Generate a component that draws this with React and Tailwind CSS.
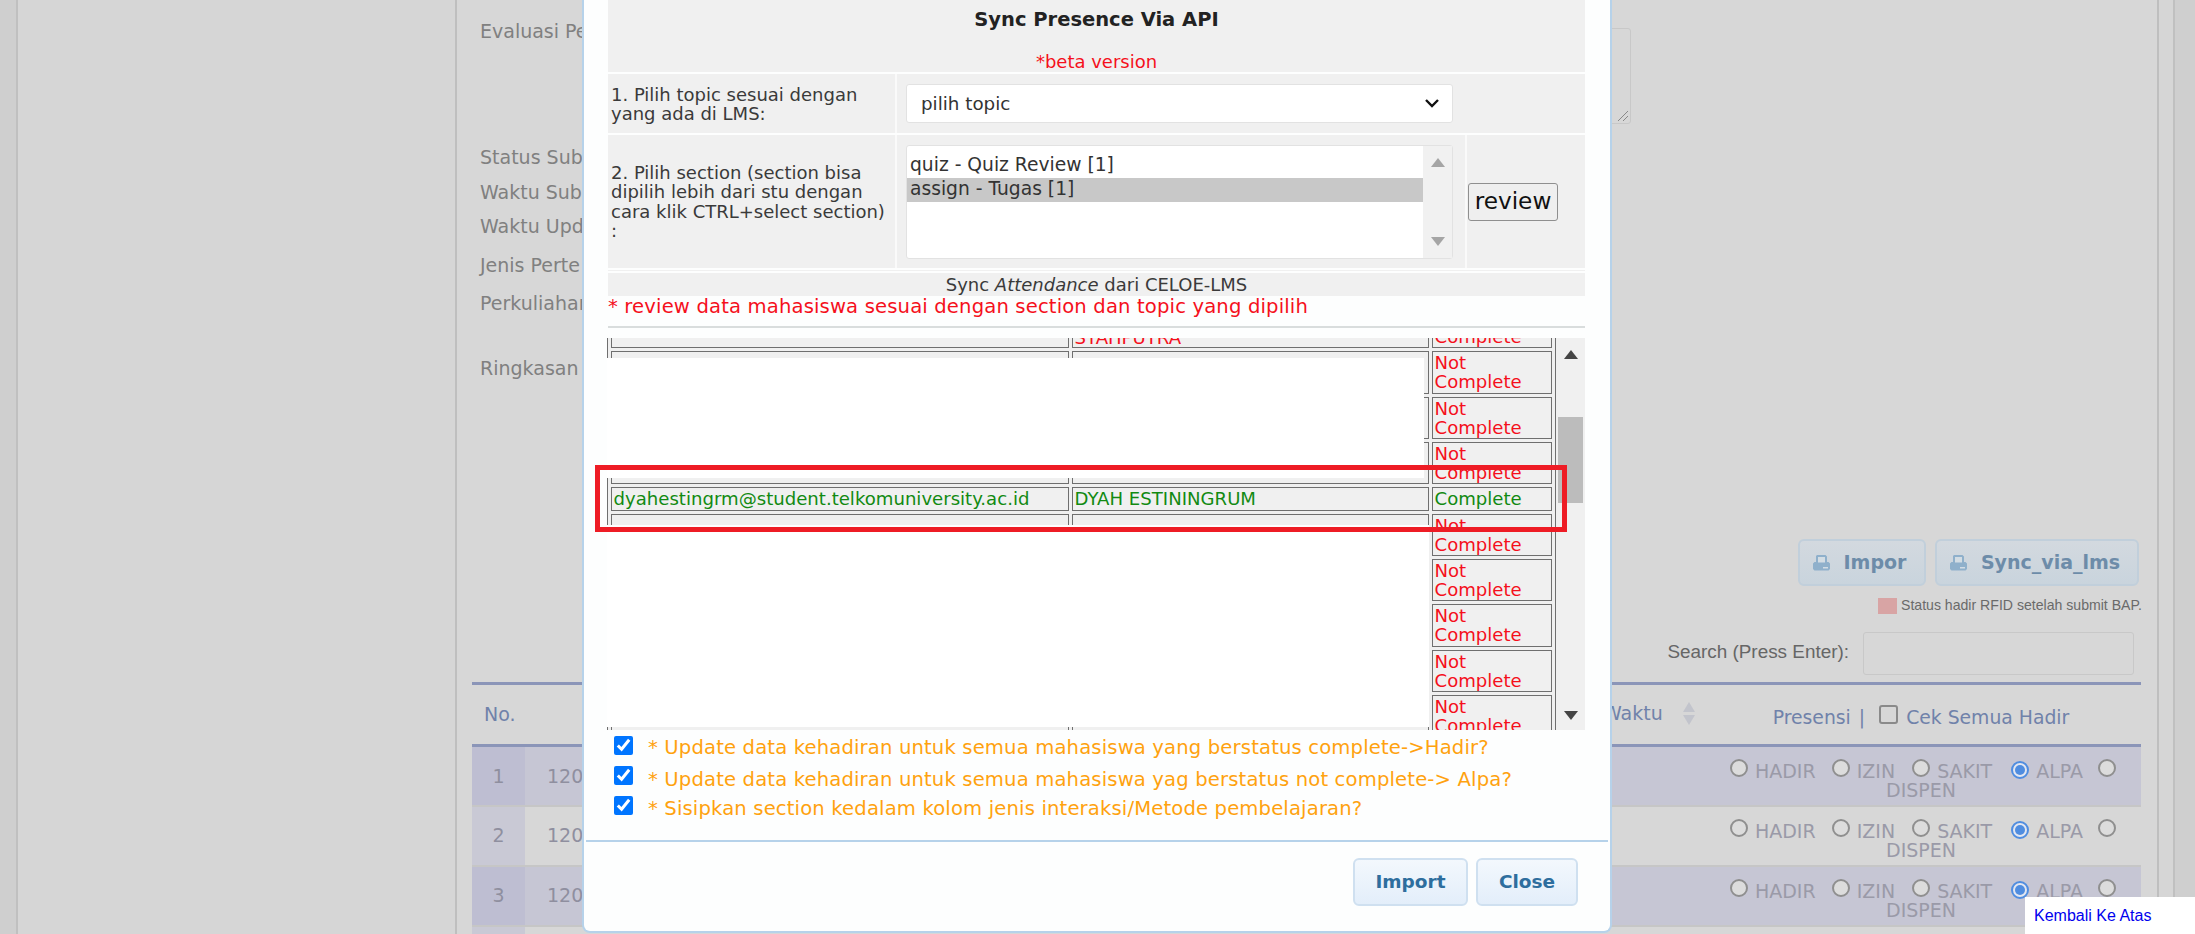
import React from "react";

const dv = "font-['DejaVu_Sans',sans-serif]";
const lib = "font-['Liberation_Sans',sans-serif]";

function Radio({ on }) {
  return on ? (
    <span className="inline-flex w-[18px] h-[18px] -my-[2px] rounded-full border-2 border-[#4f8de0] bg-[#e2e6f0] items-center justify-center align-[3px]">
      <span className="w-[10px] h-[10px] rounded-full bg-[#4f8de0]" />
    </span>
  ) : (
    <span className="inline-block w-[18px] h-[18px] -my-[2px] rounded-full border-2 border-[#8f8f8f] bg-[#dcdcdc] align-[3px]" />
  );
}

function Opt({ label, on, gap }) {
  return (
    <>
      <Radio on={on} />
      <span className={`ml-[7px] ${gap}`}>{label}</span>
    </>
  );
}

function PresensiCell() {
  return (
    <div className="text-[19px] leading-[19px] text-[#9a9aa8] text-center pt-[14px]">
      <Opt label="HADIR" gap="mr-[16px]" />
      <Opt label="IZIN" gap="mr-[17px]" />
      <Opt label="SAKIT" gap="mr-[19px]" />
      <Opt label="ALPA" on gap="mr-[15px]" />
      <span className="-mr-[4px]"><Radio /></span>
      <br />
      DISPEN
    </div>
  );
}

function Disk() {
  return (
    <svg width="17" height="18" viewBox="0 0 17 18" className="shrink-0">
      <path d="M4 1h8.500l1.500 1.500V8h1.500L17 9.500V15l-1.500 1.500h-14L0 15V9.500L1.500 8H3V2z" fill="#8fb0cb" />
      <path d="M5 3h7v5.500H5z" fill="#d3dde4" />
      <path d="M10 13h5v1.500h-5z" fill="#d3dde4" />
    </svg>
  );
}

function Triangle({ down, color = "#a5a5a5" }) {
  return (
    <svg width="14" height="9" viewBox="0 0 14 9">
      <path d={down ? "M0 0h14L7 9z" : "M7 0l7 9H0z"} fill={color} />
    </svg>
  );
}

const cellCls = "border-[1.5px] border-[#6f6f6f] bg-[#f0f0f0] p-0 px-[1.5px] text-left";

function Row({ email = "", name = "", done, first }) {
  const color = done ? "text-[#128a12]" : "text-[#f5101c]";
  return (
    <tr className={color}>
      <td className={`${cellCls} align-middle ${done ? "h-[23.500px]" : "h-[42.300px]"}`}>{email}</td>
      <td className={`${cellCls} ${first ? "align-bottom" : "align-middle"}`}>{name}</td>
      <td className={`${cellCls} align-middle`}>
        {done ? "Complete" : <>Not<br />Complete</>}
      </td>
    </tr>
  );
}

function ConfirmLine({ text, nudge }) {
  return (
    <label className="flex items-start h-[30px]">
      <input type="checkbox" checked readOnly className="w-[19px] h-[19px] accent-[#0075ff] m-0 shrink-0" />
      <span className={`ml-[15px] text-[19.600px] leading-[24px] text-[#ffa20f] tracking-[0.15px] ${nudge}`}>{text}</span>
    </label>
  );
}

function Modal() {
  return (
    <div className={`absolute left-[582px] top-0 w-[1030px] h-[933px] bg-[#fdfefe] border-x-2 border-b-2 border-[#b6d2ea] rounded-b-[8px] ${dv} text-[#3a3a3a]`}>
      <div className="ml-[24px] w-[977px]">
        <div className="h-[72px] bg-[#f0f0f0] flex flex-col items-center">
          <div className="mt-[9px] text-[19.500px] leading-[22px] font-bold text-[#222]">Sync Presence Via API</div>
          <div className="mt-[21px] text-[18px] leading-[20px] text-[#f5101c]">*beta version</div>
        </div>
        <div className="h-[2px]" />
        <div className="h-[59px] flex bg-[#f0f0f0]">
          <div className="w-[287px] pl-[3px] flex items-center text-[18px] leading-[19px]">
            <div>1. Pilih topic sesuai dengan<br />yang ada di LMS:</div>
          </div>
          <div className="w-[2px] bg-[#fafafa]" />
          <div className="flex-1 pl-[9px] pt-[10px]">
            <div className="w-[547px] h-[39px] bg-white border border-[#e2e2e2] rounded-[3px] pl-[14px] pr-[12px] flex items-center justify-between text-[18.300px] text-[#333]">
              <span>pilih topic</span>
              <svg width="16" height="11" viewBox="0 0 16 11"><path d="M2 2l6 6 6-6" fill="none" stroke="#111" strokeWidth="2.400" /></svg>
            </div>
          </div>
        </div>
        <div className="h-[2px]" />
        <div className="h-[133px] flex bg-[#f0f0f0]">
          <div className="w-[287px] pl-[3px] flex items-center text-[18px] leading-[19.400px]">
            <div>2. Pilih section (section bisa<br />dipilih lebih dari stu dengan<br />cara klik CTRL+select section)<br />:</div>
          </div>
          <div className="w-[2px] bg-[#fafafa]" />
          <div className="w-[568px] pl-[9px] pt-[10px]">
            <div className="w-[547px] h-[114px] bg-white border border-[#e2e2e2] rounded-[3px] flex text-[18.700px] text-[#333]">
              <div className="flex-1 pt-[8px]">
                <div className="h-[24px] pl-[3px] leading-[21px]">quiz - Quiz Review [1]</div>
                <div className="h-[24px] pl-[3px] leading-[21px] bg-[#c8c8c8]">assign - Tugas [1]</div>
              </div>
              <div className="w-[29px] bg-[#f1f1f1] flex flex-col items-center justify-between py-[12px]">
                <Triangle />
                <Triangle down />
              </div>
            </div>
          </div>
          <div className="w-[2px] bg-[#fafafa]" />
          <div className="flex-1 flex items-center pl-[1px]">
            <div className="w-[90px] h-[38px] bg-[#efefef] border border-[#8f8f8f] rounded-[3px] flex items-center justify-center text-[23.200px] text-[#111] pb-[1px]">review</div>
          </div>
        </div>
        <div className="h-[5px] flex flex-col"><div className="h-[2px]" /><div className="h-[1px] bg-[#f0f0f0]" /></div>
        <div className="h-[23px] bg-[#f0f0f0] text-center text-[18px] leading-[22px] pt-[1px]">Sync <i>Attendance</i> dari CELOE-LMS</div>
        <div className="h-[21px] text-[19.600px] leading-[21px] text-[#f5101c] tracking-[0.15px] whitespace-nowrap">* review data mahasiswa sesuai dengan section dan topic yang dipilih</div>
        <div className="mt-[9px] h-[2px] bg-[#d9dddd]" />
      </div>

      <div className="relative ml-[23px] w-[978px] h-[392px] mt-[10px] bg-[#f0f0f0] flex overflow-hidden text-[18.100px] leading-[19px]">
        <div className="w-[949px] overflow-hidden">
          <table className="border-separate border-spacing-[3px] table-fixed w-[949px] border-[1.5px] border-[#6f6f6f] -mt-[36px]">
            <colgroup>
              <col className="w-[458px]" />
              <col className="w-[357px]" />
              <col className="w-[120px]" />
            </colgroup>
            <tbody>
              <Row first name="SYAHPUTRA" />
              <Row />
              <Row />
              <Row />
              <Row done email="dyahestingrm@student.telkomuniversity.ac.id" name="DYAH ESTININGRUM" />
              <Row />
              <Row />
              <Row />
              <Row />
              <Row />
            </tbody>
          </table>
        </div>
        <div className="w-[29px] flex flex-col items-center">
          <div className="mt-[12px]"><Triangle color="#444" /></div>
          <div className="mt-[58px] w-[25px] h-[86px] bg-[#bcbcbc]" />
          <div className="mt-[208px]"><Triangle down color="#444" /></div>
        </div>
        <div className="absolute left-0 top-[20px] w-[817px] h-[120px] bg-white" />
        <div className="absolute left-0 top-[187px] w-[822px] h-[202px] bg-white" />
      </div>

      <div className="ml-[30px] mt-[6px]">
        <ConfirmLine nudge="mt-0" text="* Update data kehadiran untuk semua mahasiswa yang berstatus complete->Hadir?" />
        <ConfirmLine nudge="mt-[2px]" text="* Update data kehadiran untuk semua mahasiswa yag berstatus not complete-> Alpa?" />
        <ConfirmLine nudge="mt-[1px]" text="* Sisipkan section kedalam kolom jenis interaksi/Metode pembelajaran?" />
      </div>

      <div className="mx-[2px] mt-[14px] h-[2px] bg-[#b6d2ea]" />
      <div className="flex justify-end gap-[8px] pt-[16px] pr-[32px]">
        {[["Import", "w-[115px]"], ["Close", "w-[102px]"]].map(([t, w]) => (
          <div key={t} className={`${w} h-[48px] rounded-[6px] border-2 border-[#cfe0f0] bg-gradient-to-b from-[#f3f8fd] to-[#e3eefa] flex items-center justify-center text-[18.500px] font-bold text-[#2e6e9e]`}>{t}</div>
        ))}
      </div>

      <div className="absolute left-[11px] top-[465px] w-[972px] h-[67px] border-[5px] border-[#ee1c25]" />
    </div>
  );
}

export default function App() {
  return (
    <div className={`relative w-[2195px] h-[934px] overflow-hidden bg-[#cfcfcf] ${dv}`}>
      <div className="ml-[16px] w-[2159px] h-[934px] bg-[#d6d6d6] border-x-2 border-[#c0c0c0]">
        <div className="ml-[437px] w-[1704px] h-[934px] bg-[#d7d7d7] border-x-2 border-[#bfbfbf] pl-[15px] pr-[15px]">
          <div className="h-[682px] flex justify-between">
            <div className="pl-[8px] pt-[20px] text-[19px] leading-[22px] text-[#808080] flex flex-col">
              <div>Evaluasi Pe</div>
              <div className="mt-[104px]">Status Sub</div>
              <div className="mt-[13px]">Waktu Sub</div>
              <div className="mt-[12px]">Waktu Upd</div>
              <div className="mt-[17px]">Jenis Perte</div>
              <div className="mt-[16px]">Perkuliahan</div>
              <div className="mt-[43px]">Ringkasan</div>
            </div>
            <div className="flex flex-col items-end">
              <div className="mt-[28px] mr-[511px] w-[100px] h-[96px] border border-[#c8c8c8] rounded-[3px] relative">
                <svg width="12" height="12" viewBox="0 0 12 12" className="absolute right-[1px] bottom-[1px]"><path d="M1 11L11 1M6 11l5-5" stroke="#888" strokeWidth="1" /></svg>
              </div>
              <div className="mt-[415px] flex gap-[9px] mr-[3px]">
                <div className="w-[128px] h-[47px] pr-[5px] rounded-[6px] border-2 border-[#c1cfdb] bg-gradient-to-b from-[#d3d9df] to-[#c9d4dd] flex items-center justify-center gap-[14px] text-[19px] font-bold text-[#6d8ca9]">
                  <Disk />Impor
                </div>
                <div className="w-[204px] h-[47px] pr-[4px] rounded-[6px] border-2 border-[#c1cfdb] bg-gradient-to-b from-[#d3d9df] to-[#c9d4dd] flex items-center justify-center gap-[14px] text-[19px] font-bold text-[#6d8ca9]">
                  <Disk />Sync_via_lms
                </div>
              </div>
              <div className={`mt-[9px] flex items-center ${lib} text-[14.100px] text-[#6a6a6a]`}>
                <span className="w-[19px] h-[16px] bg-[#d8a4a4] mr-[4px]" />
                Status hadir RFID setelah submit BAP.
              </div>
              <div className={`mt-[16px] flex items-center mr-[8px] ${lib} text-[18.900px] text-[#666]`}>
                <span className="-mt-[2px]">Search (Press Enter):</span>
                <div className="ml-[14px] w-[271px] h-[43px] border border-[#c8c8c8] rounded-[3px]" />
              </div>
            </div>
          </div>

          <table className="w-[1669px] table-fixed border-collapse">
            <colgroup>
              <col className="w-[53px]" />
              <col className="w-[1075px]" />
              <col className="w-[101px]" />
              <col className="w-[440px]" />
            </colgroup>
            <thead>
              <tr className="h-[62px] border-y-[3px] border-[#8b95b8] text-[19px] text-[#7082aa]">
                <th className="font-normal text-left pl-[12px]">No.</th>
                <th />
                <th className="font-normal text-left pb-[2px]">
                  <span className="flex items-center justify-between pr-[6px] pl-[3px]">
                    <span>Waktu</span>
                    <span className="flex flex-col gap-[3px]">
                      <svg width="12" height="10" viewBox="0 0 12 10"><path d="M6 0l6 10H0z" fill="#c2c4cc" /></svg>
                      <svg width="12" height="10" viewBox="0 0 12 10"><path d="M0 0h12L6 10z" fill="#c2c4cc" /></svg>
                    </span>
                  </span>
                </th>
                <th className="font-normal pt-[6px]">
                  <span className="inline-flex items-center text-[18.800px]">
                    Presensi<span className="ml-[8px]">|</span>
                    <span className="ml-[14px] -mt-[8px] w-[19px] h-[19px] border-2 border-[#8a8a8a] rounded-[3px]" />
                    <span className="ml-[8px]">Cek Semua Hadir</span>
                  </span>
                </th>
              </tr>
            </thead>
            <tbody>
              {[1, 2, 3].map((n) => (
                <tr key={n} className={`h-[60px] border-b-2 border-[#c6c6c6] ${n % 2 ? "bg-[#c6c6d4]" : "bg-[#d7d7d7]"}`}>
                  <td className={`text-center text-[19px] text-[#8f8f9f] ${n % 2 ? "bg-[#bebed2]" : "bg-[#c9c9d5]"}`}>{n}</td>
                  <td className="pl-[22px] text-[19px] text-[#8f8f9f]">120</td>
                  <td />
                  <td className="align-top"><PresensiCell /></td>
                </tr>
              ))}
              <tr className="h-[20px] bg-[#d7d7d7]">
                <td className="bg-[#c9c9d5]" />
                <td colSpan={3} />
              </tr>
            </tbody>
          </table>
        </div>
      </div>

      <Modal />

      <div className={`absolute right-0 bottom-0 w-[170px] h-[37px] bg-white pl-[9px] ${lib} text-[16px] leading-[37px] text-[#0000ee]`}>Kembali Ke Atas</div>
    </div>
  );
}
